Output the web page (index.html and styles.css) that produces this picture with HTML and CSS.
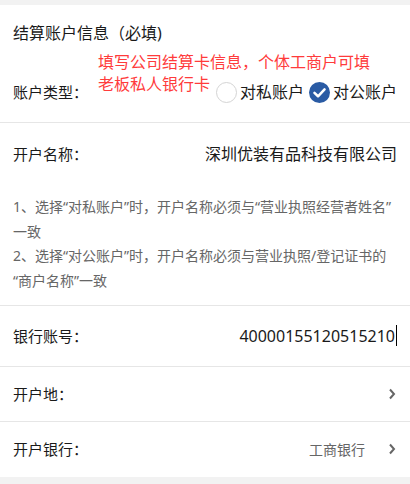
FILE: index.html
```html
<!DOCTYPE html>
<html lang="zh">
<head>
<meta charset="utf-8">
<link rel="stylesheet" href="styles.css">
</head>
<body>
<div class="page">
  <section class="card head">
    <div class="title">结算账户信息（必填)</div>
    <div class="type-row">
      <span class="label">账户类型：</span>
      <div class="radios">
        <span class="radio"><span class="dot"></span><span class="rtext">对私账户</span></span>
        <span class="radio checked"><span class="dot"><svg viewBox="0 0 20 20" width="21" height="21"><path d="M5.2 10.4 L8.6 13.6 L14.8 7" fill="none" stroke="#fff" stroke-width="2.4" stroke-linecap="round" stroke-linejoin="round"/></svg></span><span class="rtext">对公账户</span></span>
      </div>
    </div>
    <div class="annotation">
      <span class="aline">填写公司结算卡信息，个体工商户可填</span>
      <span class="aline">老板私人银行卡</span>
    </div>
  </section>
  <section class="card name">
    <div class="row name-row">
      <span class="label">开户名称：</span>
      <span class="value">深圳优装有品科技有限公司</span>
    </div>
    <div class="notes">
      <p>1、选择“对私账户”时，开户名称必须与“营业执照经营者姓名”一致</p>
      <p>2、选择“对公账户”时，开户名称必须与营业执照/登记证书的“商户名称”一致</p>
    </div>
  </section>
  <section class="card row acct-row">
    <span class="label">银行账号：</span>
    <span class="value num">40000155120515210<span class="caret"></span></span>
  </section>
  <section class="card row link-row place">
    <span class="label">开户地：</span>
    <span class="chev"><svg viewBox="0 0 8 12" width="8" height="12"><path d="M2 1.5 L6 6 L2 10.5" fill="none" stroke="#666" stroke-width="2"/></svg></span>
  </section>
  <section class="card row link-row bank">
    <span class="label">开户银行：</span>
    <span class="side"><span class="muted">工商银行</span><span class="chev"><svg viewBox="0 0 8 12" width="8" height="12"><path d="M2 1.5 L6 6 L2 10.5" fill="none" stroke="#666" stroke-width="2"/></svg></span></span>
  </section>
</div>
</body>
</html>
```
FILE: styles.css
```css
html, body {
  margin: 0;
  padding: 0;
}
body {
  background: #f2f2f2;
  font-family: "Noto Sans", "Noto Sans CJK SC", sans-serif;
  color: #1a1a1a;
}
.page {
  width: 410px;
  height: 484px;
  padding-top: 5px;
  box-sizing: border-box;
  overflow: hidden;
}
.card {
  background: #fff;
  border-bottom: 1px solid #e6e6e6;
}
.head {
  position: relative;
  height: 118px;
  box-sizing: border-box;
  padding: 16px 13px 0 13px;
}
.title {
  font-size: 16px;
  line-height: 24px;
}
.type-row {
  margin-top: 27px;
  height: 40px;
  display: flex;
  align-items: center;
  justify-content: space-between;
}
.label {
  font-size: 15px;
  line-height: 22px;
  color: #1a1a1a;
}
.radios {
  display: flex;
  align-items: center;
  gap: 5px;
}
.radio {
  display: flex;
  align-items: center;
  gap: 3px;
  font-size: 16px;
  line-height: 20px;
}
.dot {
  width: 21px;
  height: 21px;
  border-radius: 50%;
  box-sizing: border-box;
  border: 1px solid #d4d4d4;
  display: flex;
  align-items: center;
  justify-content: center;
}
.checked .dot {
  border: none;
  background: #2a5ba4;
}
.annotation {
  position: absolute;
  left: 98px;
  top: 47px;
  display: flex;
  flex-direction: column;
  align-items: flex-start;
  font-size: 16px;
  line-height: 22px;
  color: #ff3b3b;
}
.aline {
  display: block;
  height: 20px;
  line-height: 20px;
  margin-bottom: 2px;
}
.row {
  display: flex;
  align-items: center;
  justify-content: space-between;
  padding: 0 13px;
}
.name-row {
  height: 62px;
}
.value {
  font-size: 16px;
  line-height: 22px;
}
.notes {
  padding: 10px 13px 11px 13px;
  font-size: 14px;
  line-height: 24.7px;
  color: #666;
}
.notes p {
  margin: 0;
}
.acct-row {
  height: 61px;
  box-sizing: border-box;
}
.num {
  display: flex;
  align-items: center;
}
.caret {
  display: inline-block;
  width: 1px;
  height: 21px;
  background: #000;
  margin-left: 1px;
}
.place {
  height: 55px;
  box-sizing: border-box;
  padding-right: 14px;
}
.bank {
  height: 55px;
  box-sizing: border-box;
  padding-right: 14px;
  border-bottom: none;
}
.side {
  display: flex;
  align-items: center;
  gap: 23px;
}
.muted {
  font-size: 14px;
  color: #666;
}
.chev {
  display: flex;
}
```
